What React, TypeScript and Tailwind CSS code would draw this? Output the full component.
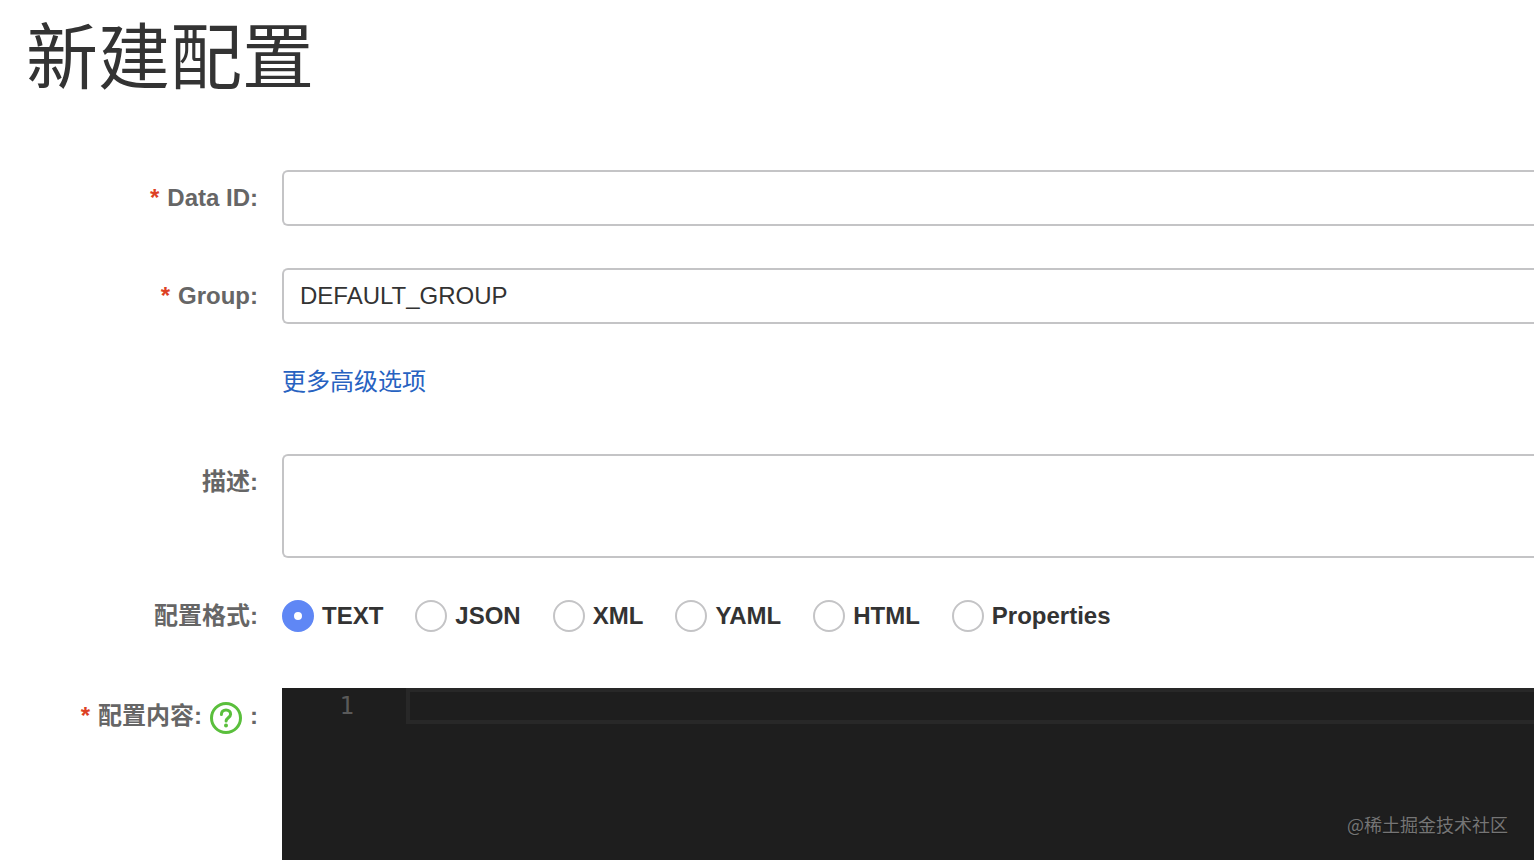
import React, { useState } from "react";

const FORMATS = ["TEXT", "JSON", "XML", "YAML", "HTML", "Properties"];

const labelClass =
  "flex h-14 w-[258px] shrink-0 items-center justify-end font-bold text-[#666666]";

const fieldClass =
  "block w-full rounded-l-md border-2 border-r-0 border-[#c4c4c6] bg-white px-4 text-[#333333] outline-none focus:border-[#5584ff]";

function Required() {
  return <span className="mr-2 text-[#dd4124]">*</span>;
}

function HelpIcon() {
  return (
    <svg
      viewBox="0 0 32 32"
      className="size-8"
      fill="none"
      stroke="#5abf3c"
      strokeWidth="3"
      strokeLinecap="round"
    >
      <circle cx="16" cy="16" r="14.5" />
      <path d="M11.4 12.6c0-2.9 1.9-4.7 4.6-4.7s4.6 1.8 4.6 4.3c0 3.4-4.5 3.7-4.5 6.9" />
      <circle cx="16" cy="23.4" r="2" fill="#5abf3c" stroke="none" />
    </svg>
  );
}

function App() {
  const [dataId, setDataId] = useState("");
  const [group, setGroup] = useState("DEFAULT_GROUP");
  const [desc, setDesc] = useState("");
  const [format, setFormat] = useState("TEXT");
  const [content, setContent] = useState("");

  return (
    <main className="flex min-h-screen flex-col bg-white pt-[22px] font-['Liberation_Sans','Noto_Sans_CJK_SC',sans-serif] text-2xl text-[#333333]">
      <h1 className="px-[26px] text-7xl">新建配置</h1>

      <form className="mt-19 flex flex-1 flex-col">
        <div className="flex gap-6">
          <label htmlFor="dataId" className={labelClass}>
            <Required />
            Data ID:
          </label>
          <div className="flex-1">
            <input
              id="dataId"
              className={`${fieldClass} h-14`}
              value={dataId}
              onChange={(e) => setDataId(e.target.value)}
            />
          </div>
        </div>

        <div className="mt-[42px] flex gap-6">
          <label htmlFor="group" className={labelClass}>
            <Required />
            Group:
          </label>
          <div className="flex-1">
            <input
              id="group"
              className={`${fieldClass} h-14`}
              value={group}
              onChange={(e) => setGroup(e.target.value)}
            />
          </div>
        </div>

        <div className="mt-[30px] flex h-14 items-center pl-[282px]">
          <a href="#more" className="text-[#2762c1]">
            更多高级选项
          </a>
        </div>

        <div className="mt-11 flex gap-6">
          <label htmlFor="desc" className={labelClass}>
            描述:
          </label>
          <div className="flex-1">
            <textarea
              id="desc"
              className={`${fieldClass} h-26 resize-none py-2`}
              value={desc}
              onChange={(e) => setDesc(e.target.value)}
            />
          </div>
        </div>

        <div className="mt-[30px] flex gap-6">
          <span id="format" className={labelClass}>
            配置格式:
          </span>
          <div
            role="radiogroup"
            aria-labelledby="format"
            className="flex items-center gap-8 font-bold"
          >
            {FORMATS.map((name) => (
              <label key={name} className="flex items-center gap-2">
                <input
                  type="radio"
                  name="format"
                  className="size-8 appearance-none rounded-full border-2 border-[#c4c4c6] bg-white checked:border-[12px] checked:border-[#5f87f5]"
                  checked={format === name}
                  onChange={() => setFormat(name)}
                />
                {name}
              </label>
            ))}
          </div>
        </div>

        <div className="mt-11 flex flex-1 gap-6">
          <label htmlFor="content" className={labelClass}>
            <Required />
            <span className="mr-2">配置内容:</span>
            <span className="mr-2 pt-1">
              <HelpIcon />
            </span>
            :
          </label>
          <div className="relative flex min-h-40 flex-1 bg-[#1e1e1e] font-['DejaVu_Sans_Mono',monospace] leading-9">
            <div className="w-[72px] shrink-0 text-right text-[#5a5a5a]">1</div>
            <div className="relative ml-[52px] flex-1">
              {/* current line */}
              <div className="pointer-events-none absolute inset-x-0 top-0 h-9 border-4 border-r-0 border-[#282828]" />
              <textarea
                id="content"
                className="block h-full w-full resize-none bg-transparent px-1 text-[#d4d4d4] outline-none"
                spellCheck={false}
                value={content}
                onChange={(e) => setContent(e.target.value)}
              />
            </div>
            <span className="pointer-events-none absolute right-[26px] bottom-[22px] font-['Noto_Sans_CJK_SC',sans-serif] text-lg text-[#757575] text-shadow-sm">
              @稀土掘金技术社区
            </span>
          </div>
        </div>
      </form>
    </main>
  );
}

export default App;
